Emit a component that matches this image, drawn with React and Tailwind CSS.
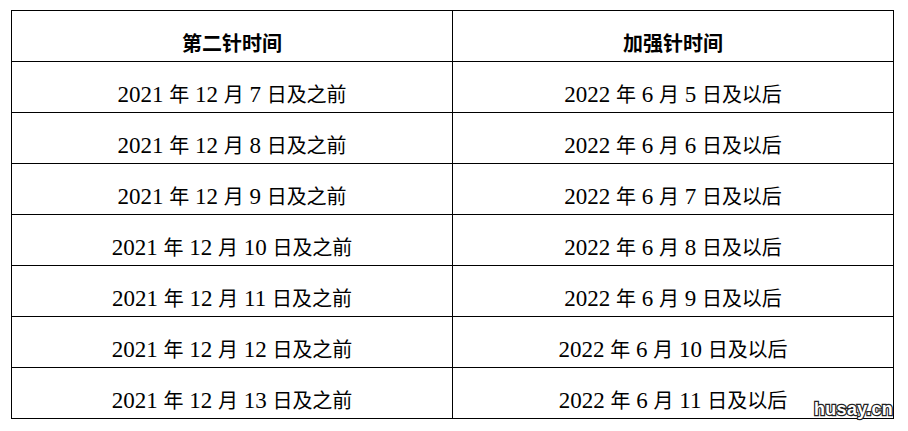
import React from 'react'

const rows = [
  ['2021', '12', '7', '2022', '6', '5'],
  ['2021', '12', '8', '2022', '6', '6'],
  ['2021', '12', '9', '2022', '6', '7'],
  ['2021', '12', '10', '2022', '6', '8'],
  ['2021', '12', '11', '2022', '6', '9'],
  ['2021', '12', '12', '2022', '6', '10'],
  ['2021', '12', '13', '2022', '6', '11'],
]

const cjk = "font-['Noto_Sans_CJK_SC',sans-serif] text-[20px]"
const num = "font-['Liberation_Serif',serif] text-[23px]"

function DateText({ y, m, d, tail }) {
  return (
    <span className="whitespace-pre leading-none">
      <span className={num}>{y} </span>
      <span className={cjk}>年</span>
      <span className={num}> {m} </span>
      <span className={cjk}>月</span>
      <span className={num}> {d} </span>
      <span className={cjk}>日{tail}</span>
    </span>
  )
}

function Cell({ children }) {
  return (
    <td className="h-[51px] border border-black p-0 text-center align-middle text-black">
      <div className="flex h-full items-center justify-center pt-[14px]">{children}</div>
    </td>
  )
}

export default function App() {
  return (
    <div className="relative h-[431px] w-[908px] bg-white">
      <div className="pl-[11px] pt-[10px]">
        <table className="w-[883px] table-fixed border-collapse">
          <tbody>
            <tr>
              <Cell>
                <span className={`${cjk} font-bold text-[20px] leading-none`}>第二针时间</span>
              </Cell>
              <Cell>
                <span className={`${cjk} font-bold text-[20px] leading-none`}>加强针时间</span>
              </Cell>
            </tr>
            {rows.map((r, i) => (
              <tr key={i}>
                <Cell>
                  <DateText y={r[0]} m={r[1]} d={r[2]} tail="及之前" />
                </Cell>
                <Cell>
                  <DateText y={r[3]} m={r[4]} d={r[5]} tail="及以后" />
                </Cell>
              </tr>
            ))}
          </tbody>
        </table>
      </div>
      <div className="absolute left-[814px] top-[400px] font-['Liberation_Sans',sans-serif] text-[18px] font-bold leading-none tracking-[0.3px] text-white [-webkit-text-stroke:2.4px_#222] [paint-order:stroke_fill]">
        husay.cn
      </div>
    </div>
  )
}
